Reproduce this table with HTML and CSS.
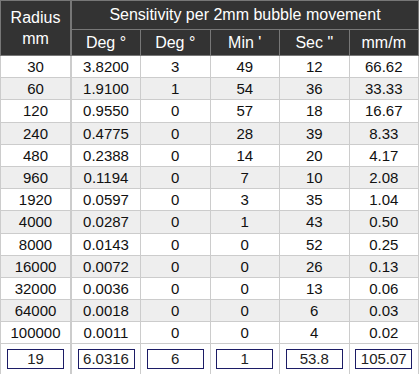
FILE: index.html
```html
<!DOCTYPE html>
<html>
<head>
<meta charset="utf-8">
<link rel="stylesheet" href="styles.css">
</head>
<body>
<table class="sens">
  <thead>
    <tr class="h1">
      <th rowspan="2" class="radius">Radius<br>mm</th>
      <th colspan="5">Sensitivity per 2mm bubble movement</th>
    </tr>
    <tr class="h2">
      <th>Deg °</th>
      <th>Deg °</th>
      <th>Min '</th>
      <th>Sec "</th>
      <th>mm/m</th>
    </tr>
  </thead>
  <tbody>
    <tr><td>30</td><td>3.8200</td><td>3</td><td>49</td><td>12</td><td>66.62</td></tr>
    <tr><td>60</td><td>1.9100</td><td>1</td><td>54</td><td>36</td><td>33.33</td></tr>
    <tr><td>120</td><td>0.9550</td><td>0</td><td>57</td><td>18</td><td>16.67</td></tr>
    <tr><td>240</td><td>0.4775</td><td>0</td><td>28</td><td>39</td><td>8.33</td></tr>
    <tr><td>480</td><td>0.2388</td><td>0</td><td>14</td><td>20</td><td>4.17</td></tr>
    <tr><td>960</td><td>0.1194</td><td>0</td><td>7</td><td>10</td><td>2.08</td></tr>
    <tr><td>1920</td><td>0.0597</td><td>0</td><td>3</td><td>35</td><td>1.04</td></tr>
    <tr><td>4000</td><td>0.0287</td><td>0</td><td>1</td><td>43</td><td>0.50</td></tr>
    <tr><td>8000</td><td>0.0143</td><td>0</td><td>0</td><td>52</td><td>0.25</td></tr>
    <tr><td>16000</td><td>0.0072</td><td>0</td><td>0</td><td>26</td><td>0.13</td></tr>
    <tr><td>32000</td><td>0.0036</td><td>0</td><td>0</td><td>13</td><td>0.06</td></tr>
    <tr><td>64000</td><td>0.0018</td><td>0</td><td>0</td><td>6</td><td>0.03</td></tr>
    <tr><td>100000</td><td>0.0011</td><td>0</td><td>0</td><td>4</td><td>0.02</td></tr>
    <tr class="inputs">
      <td><div class="box">19</div></td>
      <td><div class="box">6.0316</div></td>
      <td><div class="box">6</div></td>
      <td><div class="box">1</div></td>
      <td><div class="box">53.8</div></td>
      <td><div class="box">105.07</div></td>
    </tr>
  </tbody>
</table>
</body>
</html>
```
FILE: styles.css
```css
html, body {
  margin: 0;
  padding: 0;
  background: #fff;
}
body {
  font-family: "Liberation Sans", Arial, sans-serif;
  font-size: 15px;
  color: #111;
}
.sens {
  border-collapse: collapse;
  width: 419px;
  table-layout: fixed;
}
.sens th {
  background: #333;
  color: #fff;
  font-weight: normal;
  border: 1px solid #777;
  padding: 0;
  text-align: center;
  vertical-align: middle;
  font-size: 16px;
}
.sens .h1 th {
  height: 28px;
}
.sens .h1 th.radius {
  line-height: 21px;
  width: 69px;
  border-right: 2px solid #777;
}
.sens .h2 th {
  height: 25px;
}
.sens td {
  border: 1px solid #ccc;
  padding: 0;
  height: 21.2px;
  text-align: center;
  vertical-align: middle;
  font-size: 15px;
}
.sens td:first-child {
  border-right: 2px solid #ccc;
}
.sens tbody tr:nth-child(even) td {
  background: #eee;
}
.sens tbody tr.inputs td {
  background: #fff;
  height: 32px;
  vertical-align: top;
}
.box {
  margin: 5px auto 0;
  width: 55px;
  height: 18px;
  line-height: 18px;
  border: 1px solid #1c1c66;
  color: #222;
}
```
